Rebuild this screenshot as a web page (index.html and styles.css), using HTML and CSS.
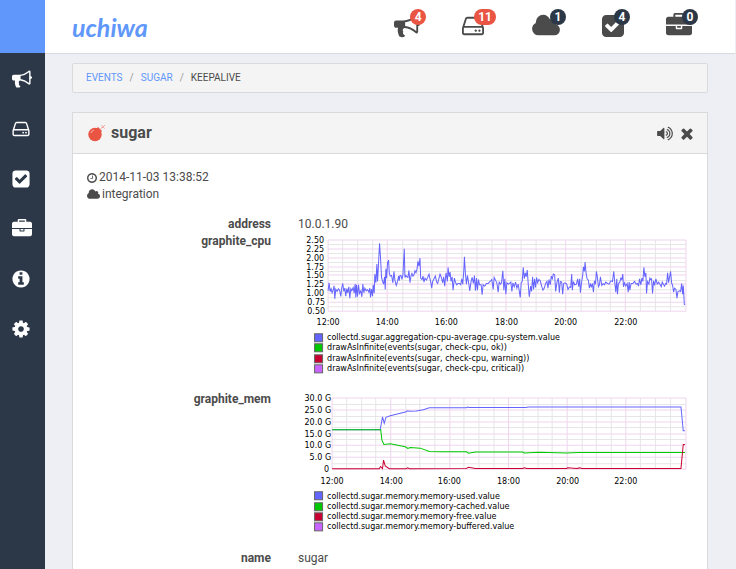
FILE: index.html
```html
<!DOCTYPE html>
<html lang="en">
<head>
<meta charset="utf-8">
<title>uchiwa</title>
<link rel="stylesheet" href="styles.css">
</head>
<body>
<svg class="defs" aria-hidden="true">
  <symbol id="bullhorn" viewBox="0 0 1792 1792"><path d="M1664 640q53 0 90.5 37.5t37.5 90.5-37.5 90.5-90.5 37.5v384q0 52-38 90t-90 38q-417-347-812-380-58 19-91 66t-31 100.5 40 92.5q-20 33-23 65.5t6 58 33.5 55 48 50 61.500 50.500q-29 58-111.500 83t-168.500 11.500-132-55.500q-7-23-29.500-87.500t-32-94.500-23-89-15-101 3.500-98.500 22-110.500h-122q-66 0-113-47t-47-113v-192q0-66 47-113t113-47h480q435 0 896-384 52 0 90 38t38 90v384zm-128 604v-954q-394 302-768 343v270q377 42 768 341z"/></symbol>
  <symbol id="hdd" viewBox="128 0 1536 1792"><path d="M1168 1216q0 33-23.500 56.500t-56.500 23.500-56.500-23.500-23.500-56.500 23.500-56.500 56.500-23.500 56.500 23.500 23.500 56.500zm256 0q0 33-23.500 56.500t-56.500 23.500-56.500-23.500-23.500-56.500 23.500-56.500 56.500-23.500 56.500 23.500 23.500 56.500zm112 160v-320q0-13-9.500-22.500t-22.500-9.500h-1216q-13 0-22.500 9.500t-9.500 22.500v320q0 13 9.500 22.500t22.500 9.500h1216q13 0 22.500-9.500t9.500-22.500zm-1230-480h1180l-157-482q-4-13-16-21.500t-26-8.500h-782q-14 0-26 8.500t-16 21.500zm1358 160v320q0 66-47 113t-113 47h-1216q-66 0-113-47t-47-113v-320q0-25 16-75l197-606q17-53 63-86t101-33h782q55 0 101 33t63 86l197 606q16 50 16 75z"/></symbol>
  <symbol id="cloud" viewBox="64 0 1920 1792"><path d="M1984 1152q0 159-112.500 271.500t-271.500 112.500h-1088q-185 0-316.500-131.500t-131.500-316.500q0-132 71-241.500t187-163.500q-2-28-2-43 0-212 150-362t362-150q158 0 286.500 88t187.500 230q70-62 166-62 106 0 181 75t75 181q0 75-41 138 129 30 213 134.500t84 239.500z"/></symbol>
  <symbol id="check" viewBox="128 0 1536 1792"><path d="M813 1299l614-614q19-19 19-45t-19-45l-102-102q-19-19-45-19t-45 19l-467 467-211-211q-19-19-45-19t-45 19l-102 102q-19 19-19 45t19 45l358 358q19 19 45 19t45-19zm851-883v960q0 119-84.500 203.500t-203.500 84.500h-960q-119 0-203.500-84.500t-84.500-203.500v-960q0-119 84.500-203.500t203.500-84.500h960q119 0 203.500 84.500t84.500 203.500z"/></symbol>
  <symbol id="briefcase" viewBox="0 0 1792 1792"><path d="M640 256h512v-128h-512v128zm1152 640v480q0 66-47 113t-113 47h-1472q-66 0-113-47t-47-113v-480h672v160q0 26 19 45t45 19h320q26 0 45-19t19-45v-160h672zm-768 0v128h-256v-128h256zm768-480v384h-1792v-384q0-66 47-113t113-47h352v-160q0-40 28-68t68-28h576q40 0 68 28t28 68v160h352q66 0 113 47t47 113z"/></symbol>
  <symbol id="info" viewBox="128 0 1536 1792"><path d="M1152 1376v-160q0-14-9-23t-23-9h-96v-512q0-14-9-23t-23-9h-320q-14 0-23 9t-9 23v160q0 14 9 23t23 9h96v320h-96q-14 0-23 9t-9 23v160q0 14 9 23t23 9h448q14 0 23-9t9-23zm-128-896v-160q0-14-9-23t-23-9h-192q-14 0-23 9t-9 23v160q0 14 9 23t23 9h192q14 0 23-9t9-23zm640 416q0 209-103 385.500t-279.500 279.500-385.500 103-385.500-103-279.500-279.500-103-385.500 103-385.500 279.500-279.500 385.500-103 385.500 103 279.500 279.500 103 385.500z"/></symbol>
  <symbol id="cog" viewBox="128 0 1536 1792"><path d="M1152 896q0-106-75-181t-181-75-181 75-75 181 75 181 181 75 181-75 75-181zm512-109v222q0 12-8 23t-20 13l-185 28q-19 54-39 91 35 50 107 138 10 12 10 25t-9 23q-27 37-99 108t-94 71q-12 0-26-9l-138-108q-44 23-91 38-16 136-29 186-7 28-36 28h-222q-14 0-24.500-8.500t-11.500-21.500l-28-184q-49-16-90-37l-141 107q-10 9-25 9-14 0-25-11-126-114-165-168-7-10-7-23 0-12 8-23 15-21 51-66.500t54-70.500q-27-50-41-99l-183-27q-13-2-21-12.500t-8-23.500v-222q0-12 8-23t19-13l186-28q14-46 39-92-40-57-107-138-10-12-10-24 0-10 9-23 26-36 98.500-107.500t94.500-71.500q13 0 26 10l138 107q44-23 91-38 16-136 29-186 7-28 36-28h222q14 0 24.500 8.500t11.500 21.500l28 184q49 16 90 37l142-107q9-9 24-9 13 0 25 10 129 119 165 170 7 8 7 22 0 12-8 23-15 21-51 66.500t-54 70.500q26 50 41 98l183 28q13 2 21 12.500t8 23.500z"/></symbol>
  <symbol id="clock" viewBox="128 0 1536 1792"><path d="M1024 544v448q0 14-9 23t-23 9h-320q-14 0-23-9t-9-23v-64q0-14 9-23t23-9h224v-352q0-14 9-23t23-9h64q14 0 23 9t9 23zm416 352q0-148-73-273t-198-198-273-73-273 73-198 198-73 273 73 273 198 198 273 73 273-73 198-198 73-273zm224 0q0 209-103 385.500t-279.500 279.500-385.500 103-385.500-103-279.500-279.500-103-385.500 103-385.500 279.500-279.500 385.500-103 385.500 103 279.500 279.500 103 385.500z"/></symbol>
  <symbol id="volume" viewBox="64 0 1664 1792"><path d="M832 352v1088q0 26-19 45t-45 19-45-19l-333-333h-262q-26 0-45-19t-19-45v-384q0-26 19-45t45-19h262l333-333q19-19 45-19t45 19 19 45zm384 544q0 76-42.500 141.500t-112.500 93.500q-10 5-25 5-26 0-45-18.500t-19-45.500q0-21 12-35.500t29-25 34-23 29-36 12-56.500-12-56.500-29-36-34-23-29-25-12-35.500q0-27 19-45.500t45-18.500q15 0 25 5 70 27 112.500 93t42.500 142zm256 0q0 153-85 282.500t-225 188.500q-13 5-25 5-27 0-46-19t-19-45q0-39 39-59 56-29 76-44 74-54 115.500-135.500t41.500-173.500-41.500-173.500-115.500-135.500q-20-15-76-44-39-20-39-59 0-26 19-45t45-19q13 0 26 5 140 59 225 188.500t85 282.500zm256 0q0 230-127 422.500t-338 283.500q-13 5-26 5-26 0-45-19t-19-45q0-36 39-59 7-4 22.500-10.500t22.500-10.500q46-25 82-51 123-91 192-227t69-289-69-289-192-227q-36-26-82-51-7-4-22.500-10.500t-22.500-10.500q-39-23-39-59 0-26 19-45t45-19q13 0 26 5 211 91 338 283.500t127 422.500z"/></symbol>
  <symbol id="times" viewBox="302 0 1188 1792"><path d="M1490 1322q0 40-28 68l-136 136q-28 28-68 28t-68-28l-294-294-294 294q-28 28-68 28t-68-28l-136-136q-28-28-28-68t28-68l294-294-294-294q-28-28-28-68t28-68l136-136q28-28 68-28t68 28l294 294 294-294q28-28 68-28t68 28l136 136q28 28 28 68t-28 68l-294 294 294 294q28 28 28 68z"/></symbol>
</svg>

<aside class="sidebar">
  <div class="sidebar-top"></div>
  <nav class="side-nav" aria-label="Main">
    <a href="#events" aria-label="Events"><svg class="wide"><use href="#bullhorn"/></svg></a>
    <a href="#clients" aria-label="Clients"><svg><use href="#hdd"/></svg></a>
    <a href="#checks" aria-label="Checks"><svg><use href="#check"/></svg></a>
    <a href="#stashes" aria-label="Stashes"><svg class="wide"><use href="#briefcase"/></svg></a>
    <a href="#info" aria-label="Info"><svg><use href="#info"/></svg></a>
    <a href="#settings" aria-label="Settings"><svg><use href="#cog"/></svg></a>
  </nav>
</aside>

<div class="page">
  <header class="topbar">
    <a class="logo" href="#home">uchiwa</a>
    <nav class="stats" aria-label="Status">
      <a href="#events"><svg class="wide"><use href="#bullhorn"/></svg><span class="badge alert">4</span></a>
      <a href="#clients"><svg><use href="#hdd"/></svg><span class="badge alert">11</span></a>
      <a href="#datacenters"><svg class="cloud"><use href="#cloud"/></svg><span class="badge">1</span></a>
      <a href="#checks"><svg><use href="#check"/></svg><span class="badge">4</span></a>
      <a href="#stashes"><svg class="wide"><use href="#briefcase"/></svg><span class="badge">0</span></a>
    </nav>
  </header>

  <main class="content">
    <ol class="breadcrumb">
      <li><a href="#events">EVENTS</a></li>
      <li><a href="#sugar">SUGAR</a></li>
      <li>KEEPALIVE</li>
    </ol>

    <section class="panel">
      <div class="panel-head">
        <svg class="bomb" viewBox="0 0 18 18" aria-hidden="true">
          <circle cx="7" cy="10.500" r="6.700" fill="#ea5443"/>
          <path d="M10 3l4 4-2 2-4-4z" fill="#ea5443"/>
          <path d="M3 9q.6-2.600 3-3" stroke="#f6b0a6" fill="none"/>
          <path d="M12.500 5.500q.3-1.500 1.500-2M13.500 1l3 3.500M17 1l-3 3" stroke="#f0a79e" fill="none"/>
        </svg>
        <h1>sugar</h1>
        <div class="actions">
          <button type="button" aria-label="Silence"><svg class="volume"><use href="#volume"/></svg></button>
          <button type="button" aria-label="Close"><svg class="times"><use href="#times"/></svg></button>
        </div>
      </div>
      <div class="panel-body">
        <p class="meta"><svg class="clock"><use href="#clock"/></svg>2014-11-03 13:38:52</p>
        <p class="meta"><svg class="dc"><use href="#cloud"/></svg>integration</p>

        <dl class="details">
          <dt>address</dt><dd>10.0.1.90</dd>
          <dt>graphite_cpu</dt>
          <dd>
            <svg class="chart" viewBox="0 0 394 158" role="img" aria-label="graphite_cpu">
              <path class="minor" d="M30 11.500h357M30 20.500h357M30 29.500h357M30 38.500h357M30 47.500h357M30 56.500h357M30 64.500h357M30 73.500h357M44.500 7v71M59.500 7v71M74.500 7v71M104.500 7v71M119.500 7v71M133.500 7v71M163.500 7v71M178.500 7v71M193.500 7v71M222.500 7v71M237.500 7v71M252.500 7v71M282.500 7v71M297.500 7v71M311.500 7v71M341.500 7v71M356.500 7v71M371.500 7v71"/>
              <path class="major" d="M30 7h357M30 16h357M30 25h357M30 34h357M30 42h357M30 51h357M30 60h357M30 69h357M30 78h357M30 7v71M89 7v71M148.500 7v71M207.500 7v71M267 7v71M326.500 7v71M387 7v71"/>
              <g class="axis end">
                <text x="26" y="10">2.50</text><text x="26" y="19">2.25</text><text x="26" y="28">2.00</text><text x="26" y="37">1.75</text><text x="26" y="45">1.50</text><text x="26" y="54">1.25</text><text x="26" y="63">1.00</text><text x="27" y="72">0.75</text><text x="27" y="81">0.50</text>
              </g>
              <g class="axis mid">
                <text x="30" y="92">12:00</text><text x="89" y="92">14:00</text><text x="148" y="92">16:00</text><text x="208" y="92">18:00</text><text x="267" y="92">20:00</text><text x="327" y="92">22:00</text>
              </g>
              <svg x="27" y="5" width="361" height="76" viewBox="0 0 1083 228">
                <polyline class="cpu" points="9,158 12,134 15,160 18,152 21,164 24,156 27,143 29,182 32,153 36,160 40,152 44,158 47,175 50,148 53,136 56,160 59,150 62,174 65,151 68,164 71,146 74,180 77,152 80,158 84,148 87,165 90,138 92,178 94,140 97,176 100,140 103,166 107,158 110,176 113,138 116,164 119,150 123,158 127,154 131,162 134,150 136,178 139,153 142,174 144,140 147,165 149,108 152,134 155,78 157,130 160,76 163,16 166,60 169,118 172,130 175,138 178,116 180,154 182,92 184,120 187,74 190,66 192,104 195,114 199,112 203,134 206,100 209,126 213,142 217,130 220,114 222,128 224,112 227,112 230,124 233,110 237,32 239,118 242,112 245,116 248,118 251,97 254,134 257,114 260,106 263,114 266,110 269,98 272,104 275,94 278,70 281,84 284,60 286,120 290,124 293,114 296,132 299,120 303,126 307,118 311,108 314,122 317,136 319,150 322,130 326,122 330,114 334,132 337,136 341,120 344,108 348,118 352,134 355,116 358,144 362,104 366,130 368,88 371,116 374,102 377,130 380,116 383,156 387,120 390,132 394,140 398,136 402,136 406,140 409,122 412,138 415,100 417,56 420,108 423,138 426,112 430,136 433,158 437,130 440,118 444,136 447,112 450,158 453,120 456,156 459,124 462,140 467,140 470,170 473,140 478,144 483,136 488,136 494,130 499,124 503,154 506,118 510,126 514,134 518,162 521,132 525,138 528,134 532,98 535,156 538,122 541,168 544,134 548,138 552,136 556,132 559,160 562,134 566,146 570,132 574,150 578,138 581,158 584,178 587,134 590,130 593,88 596,122 599,104 602,116 605,96 608,138 611,176 615,144 618,160 621,116 624,154 627,122 630,148 633,118 636,134 640,124 644,128 648,144 652,156 656,150 660,136 664,130 667,150 670,124 674,140 677,114 680,122 683,108 687,110 690,160 694,132 698,120 701,164 704,130 708,132 711,168 714,136 718,134 723,138 727,154 731,146 735,148 738,108 740,156 743,130 747,140 752,138 756,122 759,146 762,122 764,164 768,130 771,112 773,86 776,100 778,72 781,104 784,122 788,126 791,150 794,138 797,146 800,136 803,162 806,128 809,138 812,100 815,118 818,146 821,140 824,116 828,142 832,136 836,140 840,132 845,136 850,138 855,128 860,130 864,100 867,134 870,162 873,122 875,168 878,136 882,132 885,120 888,124 891,108 893,146 896,134 900,144 904,136 907,162 910,132 912,156 916,136 921,136 926,130 931,138 935,136 938,144 941,122 945,140 948,120 951,130 954,88 957,116 960,104 962,166 965,130 969,138 972,120 974,124 977,122 980,166 983,128 986,142 990,122 994,138 998,132 1003,140 1006,146 1009,132 1013,140 1016,144 1019,136 1022,138 1025,104 1028,134 1031,116 1034,100 1037,134 1040,142 1043,162 1046,150 1050,154 1053,180 1056,160 1060,158 1064,160 1067,136 1070,168 1072,142 1075,198 1077,200"/>
              </svg>
              <g class="key">
                <rect class="blue" x="16.500" y="100.500" width="8" height="8"/><rect class="green" x="16.500" y="110.500" width="8" height="8"/><rect class="red" x="16.500" y="121.500" width="8" height="8"/><rect class="violet" x="16.500" y="131.500" width="8" height="8"/>
                <text x="29" y="107">collectd.sugar.aggregation-cpu-average.cpu-system.value</text>
                <text x="29" y="117">drawAsInfinite(events(sugar, check-cpu, ok))</text>
                <text x="29" y="128">drawAsInfinite(events(sugar, check-cpu, warning))</text>
                <text x="29" y="138">drawAsInfinite(events(sugar, check-cpu, critical))</text>
              </g>
            </svg>
          </dd>
          <dt>graphite_mem</dt>
          <dd>
            <svg class="chart" viewBox="0 0 394 158" role="img" aria-label="graphite_mem">
              <path class="minor" d="M34 13.500h353M34 25.500h353M34 36.500h353M34 48.500h353M34 60.500h353M34 72.500h353M48.500 7v71M63.500 7v71M77.500 7v71M107.500 7v71M121.500 7v71M136.500 7v71M165.500 7v71M180.500 7v71M195.500 7v71M224.500 7v71M239.500 7v71M253.500 7v71M283.500 7v71M297.500 7v71M312.500 7v71M341.500 7v71M356.500 7v71M371.500 7v71"/>
              <path class="major" d="M34 7h353M34 19h353M34 31h353M34 43h353M34 54h353M34 66h353M34 78h353M34 7v71M92.500 7v71M151.500 7v71M210 7v71M268.500 7v71M327 7v71M387 7v71"/>
              <g class="axis end">
                <text x="33" y="10">30.0 G</text><text x="33" y="22">25.0 G</text><text x="33" y="34">20.0 G</text><text x="33" y="46">15.0 G</text><text x="33" y="57">10.0 G</text><text x="33" y="69">5.0 G</text><text x="31" y="81">0</text>
              </g>
              <g class="axis mid">
                <text x="34" y="93">12:00</text><text x="93" y="93">14:00</text><text x="151" y="93">16:00</text><text x="210" y="93">18:00</text><text x="269" y="93">20:00</text><text x="327" y="93">22:00</text>
              </g>
              <polyline class="mem blue" points="34,38.700 82,38.700 83,33 84.300,25.700 86,32.300 87.700,26.300 92,24.700 108,20.700 109,19.700 111,20.300 118,20 125,18.700 131,16.700 168,16.600 169,16 171,16.500 227,16.500 230,16 382,16 384.300,39.700 386,39.700"/>
              <polyline class="mem green" points="34,38.700 82.500,38.700 83.700,49 85.700,53.300 92,52.700 107,55.700 109.500,57.300 112,56.300 122,57 131,60.300 142,60.500 168,60.700 170,62 177,60.800 224,60.800 225.700,61.800 240,61 268,61.800 280,61.300 386,61.300"/>
              <polyline class="mem red" points="34,77.500 81,77.500 82.300,75.300 84.300,77.500 85.300,69 87,74.700 91,77.500 108,77.500 109.500,76.700 111,77.500 168,77.300 170,76 177,77.300 224,77.300 226,76.500 228,77.300 268,77.300 269,76.500 278,77.300 281,76.700 283,77.300 382,77.300 384.300,53.300 386,53.300"/>
              <g class="key">
                <rect class="blue" x="16.500" y="100.500" width="8" height="8"/><rect class="green" x="16.500" y="111.500" width="8" height="8"/><rect class="red" x="16.500" y="121.500" width="8" height="8"/><rect class="violet" x="16.500" y="131.500" width="8" height="8"/>
                <text x="29" y="108">collectd.sugar.memory.memory-used.value</text>
                <text x="29" y="118">collectd.sugar.memory.memory-cached.value</text>
                <text x="29" y="128">collectd.sugar.memory.memory-free.value</text>
                <text x="29" y="138">collectd.sugar.memory.memory-buffered.value</text>
              </g>
            </svg>
          </dd>
          <dt>name</dt><dd>sugar</dd>
        </dl>
      </div>
    </section>
  </main>
</div>
</body>
</html>
```
FILE: styles.css
```css
* { box-sizing: border-box; }

body {
  margin: 0;
  height: 100vh;
  display: flex;
  overflow: hidden;
  background: #eeeff4;
  color: #4b4b4b;
  font: 12px/17px Roboto, "Liberation Sans", sans-serif;
}

a { color: #5f97fb; text-decoration: none; }
svg { display: block; fill: currentColor; }
.defs { display: none; }

.sidebar { flex: none; width: 45px; background: #2c3848; }
.sidebar-top { height: 53px; background: #5f97fb; }
.side-nav { display: flex; flex-direction: column; padding-top: 1px; }
.side-nav a { padding: 15px 12px; color: #fff; }
.side-nav svg { width: 18px; height: 20px; }
.side-nav svg.wide { width: 20px; }

.page { flex: 1; min-width: 0; }

.topbar {
  display: flex;
  align-items: center;
  justify-content: space-between;
  height: 54px;
  padding: 0 37px 0 27px;
  background: #fff;
  border-bottom: 1px solid #d9dadd;
  border-right: 1px solid #eeeff4;
}
.logo { font: italic 700 25px/32px Lato, sans-serif; }
.stats { display: flex; gap: 36px; padding-bottom: 1px; }
.stats a { display: flex; color: #4b4b4b; }
.stats svg { width: 22px; height: 26px; }
.stats svg.wide { width: 26px; }
.stats svg.cloud { width: 28px; }
.badge {
  min-width: 16px;
  height: 16px;
  margin: -4px 0 0 -10px;
  padding: 0 4px;
  border-radius: 8px;
  background: #2c3848;
  color: #fff;
  font-size: 12px;
  font-weight: 700;
  line-height: 16px;
  text-align: center;
  z-index: 1;
}
.badge.alert { background: #ea5443; }

.content { padding: 9px 28px 0 27px; }

.breadcrumb {
  display: flex;
  margin: 0 0 19px;
  padding: 0 13px;
  list-style: none;
  background: #f4f4f4;
  border: 1px solid #d9dadd;
  border-radius: 2px;
  font-size: 10px;
  line-height: 28px;
}
.breadcrumb li + li::before { content: "/"; padding: 0 7px; color: #999; }

.panel { background: #fff; border: 1px solid #d9dadd; }
.panel-head {
  display: flex;
  align-items: center;
  height: 41px;
  padding: 0 14px 0 15px;
  background: #f4f4f4;
  border-bottom: 1px solid #d9dadd;
}
.bomb { width: 18px; height: 18px; }
h1 { margin: 0 0 0 5px; font-size: 16px; line-height: 20px; }
.actions { display: flex; align-items: center; gap: 8px; margin-left: auto; }
.actions button { padding: 0; border: 0; background: none; color: #4b4b4b; }
.volume { width: 16px; height: 17px; }
.times { width: 12px; height: 17px; }

.panel-body { padding: 15px 14px 40px; }
.meta { display: flex; align-items: center; gap: 2px; margin: 0; }
.meta .clock { width: 10px; height: 12px; }
.meta .dc { width: 13px; height: 13px; }

.details {
  display: grid;
  grid-template-columns: 184px 1fr;
  column-gap: 27px;
  margin: 13px 0 0;
}
dt { font-weight: 700; text-align: right; }
dd { margin: 0; min-width: 0; }

.chart { width: 100%; height: auto; font-family: "DejaVu Sans", sans-serif; fill: #000; }
.chart .minor { stroke: #e6e6e6; fill: none; }
.chart .major { stroke: #efd6ee; fill: none; }
.axis { font-size: 8px; }
.end { text-anchor: end; }
.mid { text-anchor: middle; }
.key { font-size: 8px; }
.key rect { stroke: #666; }
.key .blue { fill: #6464ff; }
.key .green { fill: #00c800; }
.key .red { fill: #c80032; }
.key .violet { fill: #c864ff; }
.cpu { fill: none; stroke: #6464ff; stroke-width: 3; }
.chart .mem { fill: none; stroke-width: 1; }
.mem.blue { stroke: #6464ff; }
.mem.green { stroke: #00c800; }
.mem.red { stroke: #c80032; }
```
